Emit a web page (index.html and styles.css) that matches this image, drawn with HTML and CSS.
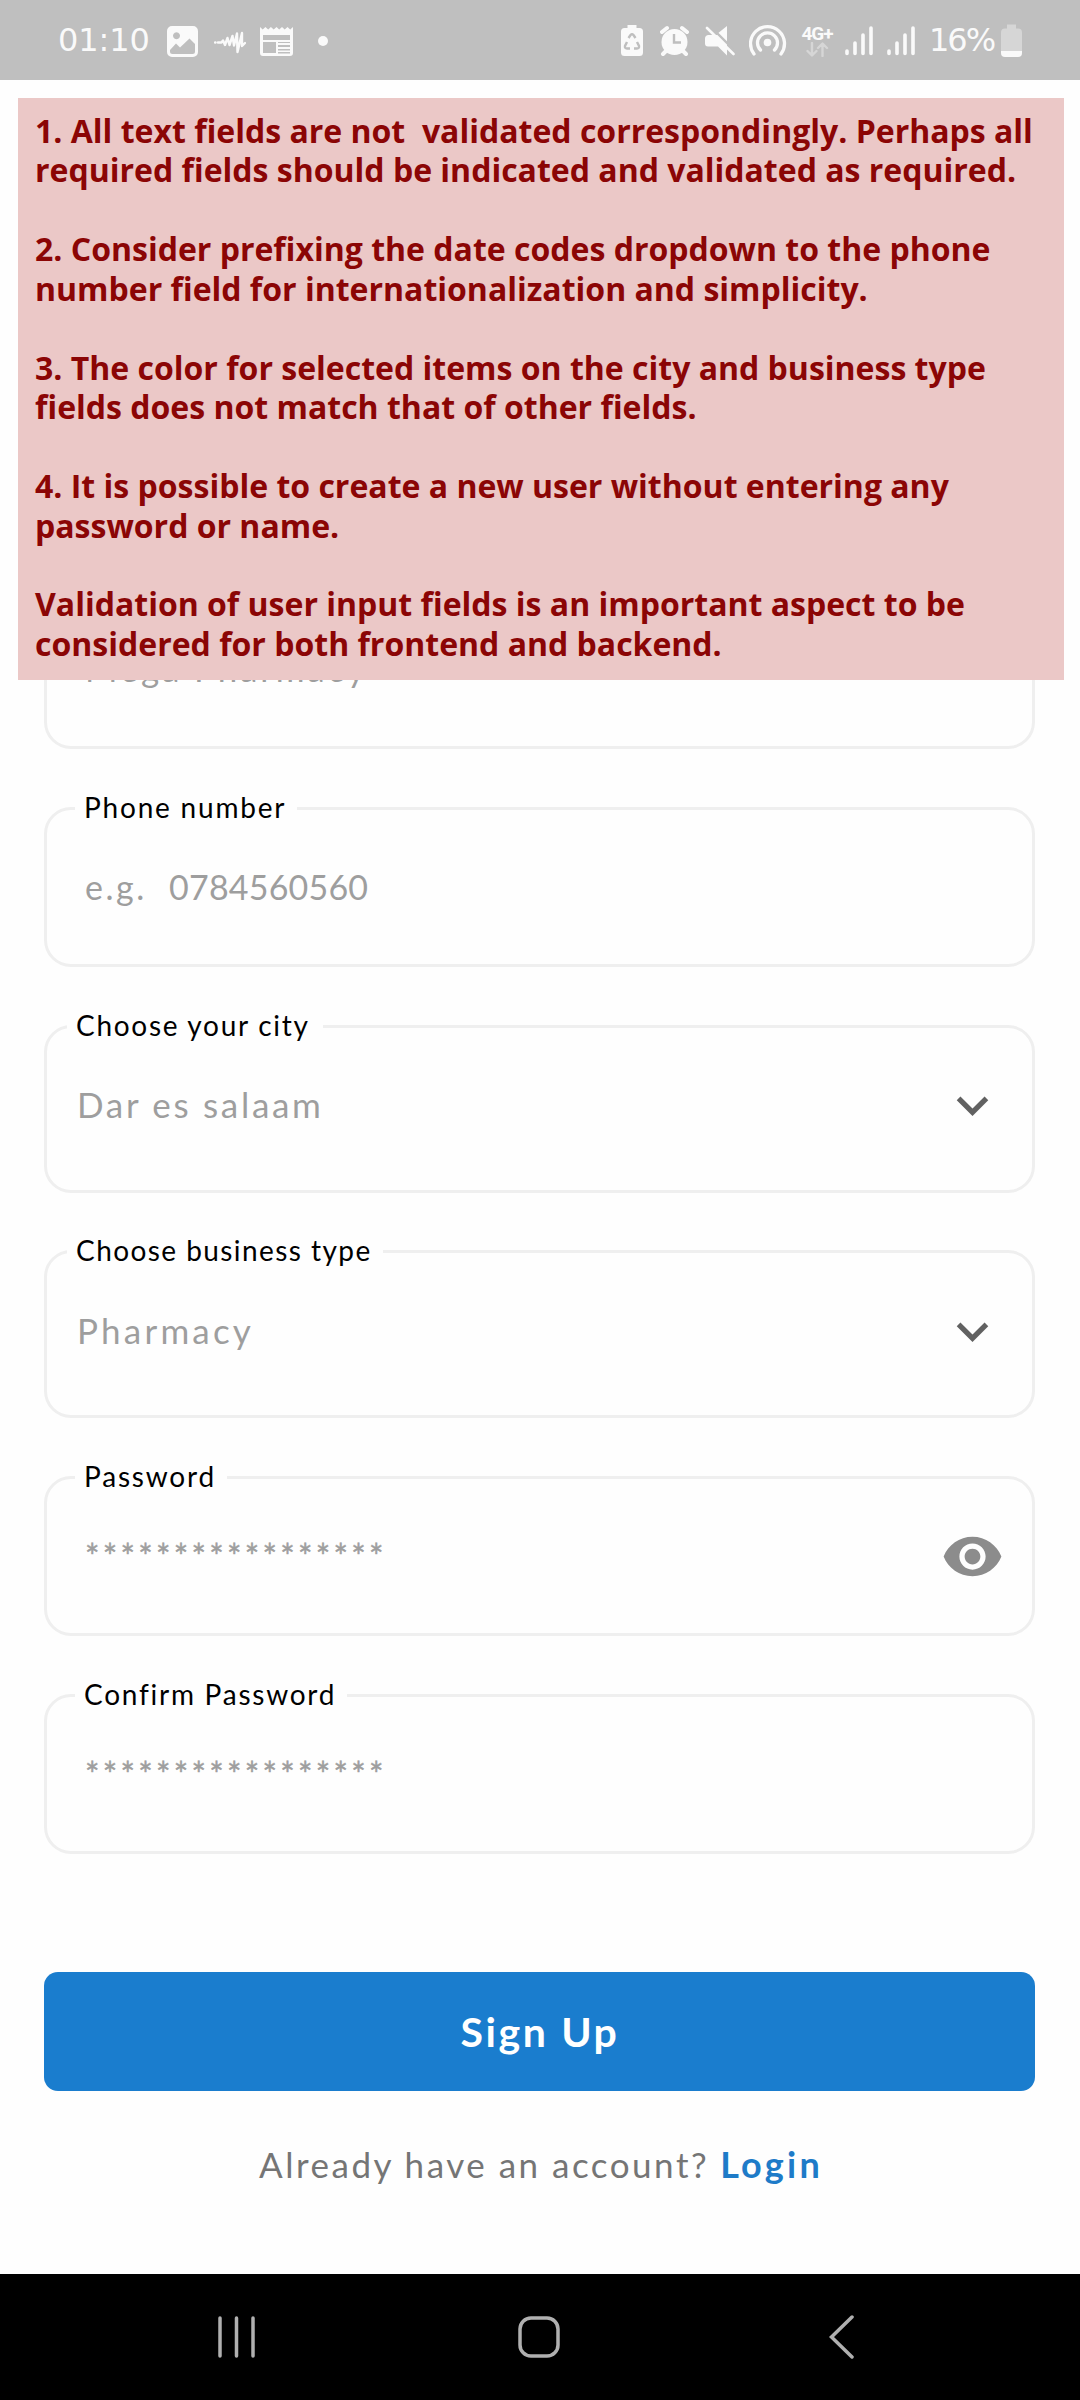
FILE: index.html
```html
<!DOCTYPE html>
<html lang="en">
<head>
<meta charset="utf-8">
<title>Sign Up</title>
<link rel="stylesheet" href="styles.css">
</head>
<body>
<header class="status">
  <div class="status-group">
    <span class="status-time">01:10</span>
    <svg width="31" height="80" viewBox="167 0 31 80"><path fill-rule="evenodd" d="M172 26h21a5 5 0 0 1 5 5v21a5 5 0 0 1-5 5h-21a5 5 0 0 1-5-5v-21a5 5 0 0 1 5-5zM176.500 32.300a3.500 3.500 0 1 0 .01 0zM170 50v1.500q0 2.500 2.500 2.500h20q2.500 0 2.500-2.500v-7.500l-5.500-5.500-9.500 9-4-4z"/></svg>
    <svg class="gap-wave" width="32" height="80" viewBox="214 0 32 80"><path class="line" stroke-width="2.400" d="M215 42.500h.5M218 42.500h3.500l1.500-2 2 4.500 2.500-7 2 7 3-9 1.500 9.500 3-12 .5 18.500 4.500-19v13l3-3"/></svg>
    <svg class="gap-cal" width="33" height="80" viewBox="260 0 33 80"><path fill-rule="evenodd" d="M260 27l2.700 2.500 2.700-2.500 2.800 2.500 2.700-2.500 2.800 2.500 2.800-2.500 2.700 2.500 2.800-2.500 2.700 2.500 2.800-2.500 2.700 2.500 2.800-2.500v26q0 3-3 3h-27q-3 0-3-3zM263 35v5h27v-5zM263 42v11h13v-11zM278 42v1h12v-1zM278 45v2h12v-2zM278 49v1.500h12v-1.500zM278 52v1.500h12v-1.500z"/></svg>
    <svg class="gap-dot" width="10" height="80" viewBox="318 0 10 80"><circle cx="323" cy="41" r="5"/></svg>
  </div>
  <div class="status-group">
    <svg width="22" height="80" viewBox="621 0 22 80"><path d="M627.500 25h9v3h3q3.500 0 3.500 3.500v21q0 3.500-3.500 3.500h-15q-3.500 0-3.500-3.500v-21q0-3.500 3.500-3.500h3z"/><path class="cut" d="M628.500 38l2-3q1.500-1.500 3 0l2 3M637 42l2 4q.5 2.500-2 2.500h-3M630 48.500h-3q-2.500 0-2-2.500l2-4"/></svg>
    <svg class="gap-alarm" width="30" height="80" viewBox="660 0 30 80"><circle cx="674.500" cy="42" r="13"/><path class="line" stroke-width="4" d="M662 32l5-4M687 32l-5-4M666 51l-3 3M683 51l3 3"/><path class="cut" d="M674 34v8.500h7"/></svg>
    <svg class="gap-mute" width="30" height="80" viewBox="705 0 30 80"><path d="M708 35h12l7 8v12.500l-9-9h-10q-3 0-3-3v-5q0-3 3-3.500zM717 34l10-8v17z"/><path class="cut" stroke-width="2" d="M709.500 25.500l26 26"/><path class="line" stroke-width="2.600" d="M707 28l26.500 26"/></svg>
    <svg class="gap-spot" width="38" height="80" viewBox="749 0 38 80"><circle cx="767.500" cy="42.500" r="3.800"/><path class="line" stroke-width="3.300" d="M754 54a17 17 0 1 1 27 0M760.500 50a10 10 0 1 1 14 0"/></svg>
    <div class="network">
      <span class="network-type">4G+</span>
      <svg class="faded" width="24" height="15" viewBox="0 0 24 15"><path class="line" stroke-width="2.400" d="M7 1v12M2.500 9l4.500 4.500 4.500-4.500M17.500 14v-12M13 6l4.500-4.500 4.500 4.500"/></svg>
    </div>
    <svg class="gap-signal" width="28" height="80" viewBox="845 0 28 80"><path class="line" stroke-width="3.600" d="M847 51v2.500M855 43v10.500M863 35v18.500M871 28v25.500"/></svg>
    <svg class="gap-signal2" width="28" height="80" viewBox="845 0 28 80"><path class="line" stroke-width="3.600" d="M847 51v2.500M855 43v10.500M863 35v18.500M871 28v25.500"/></svg>
    <span class="status-charge">16%</span>
    <svg width="21" height="80" viewBox="1001 0 21 80"><path class="faded" d="M1007 24.500h9v4h2q4 0 4 4v18.500h-21v-18.500q0-4 4-4h2z"/><path d="M1001 51h21v2q0 4-4 4h-13q-4 0-4-4z"/></svg>
  </div>
</header>

<main class="screen">
  <section class="notes">
    <p>1. All text fields are not&nbsp; validated correspondingly. Perhaps all<br>required fields should be indicated and validated as required.</p>
    <p>2. Consider prefixing the date codes dropdown to the phone<br>number field for internationalization and simplicity.</p>
    <p>3. The color for selected items on the city and business type<br>fields does not match that of other fields.</p>
    <p>4. It is possible to create a new user without entering any<br>password or name.</p>
    <p>Validation of user input fields is an important aspect to be<br>considered for both frontend and backend.</p>
  </section>

  <form class="form">
    <div class="field field-first">
      <div class="value value-mega">Mega Pharmacy</div>
    </div>
    <div class="field">
      <label class="label label-phone">Phone number</label>
      <div class="value value-phone"><span><span class="example">e.g.&nbsp; </span>0784560560</span></div>
    </div>
    <div class="field select">
      <label class="label label-city">Choose your city</label>
      <div class="value value-city">Dar es salaam
        <svg class="chevron" width="63" height="63" viewBox="0 0 24 24"><path d="M16.590 8.590L12 13.170 7.410 8.590 6 10l6 6 6-6z"/></svg>
      </div>
    </div>
    <div class="field select select-type">
      <label class="label label-type">Choose business type</label>
      <div class="value value-type">Pharmacy
        <svg class="chevron" width="63" height="63" viewBox="0 0 24 24"><path d="M16.590 8.590L12 13.170 7.410 8.590 6 10l6 6 6-6z"/></svg>
      </div>
    </div>
    <div class="field">
      <label class="label label-pass">Password</label>
      <div class="value value-stars">*****************
        <svg class="eye" width="63" height="63" viewBox="0 0 24 24"><path d="M12 4.500C7 4.500 2.730 7.610 1 12c1.730 4.390 6 7.500 11 7.500s9.270-3.110 11-7.500c-1.730-4.390-6-7.500-11-7.500zM12 17c-2.760 0-5-2.240-5-5s2.240-5 5-5 5 2.240 5 5-2.240 5-5 5zm0-8c-1.660 0-3 1.340-3 3s1.340 3 3 3 3-1.340 3-3-1.340-3-3-3z"/></svg>
      </div>
    </div>
    <div class="field">
      <label class="label label-confirm">Confirm Password</label>
      <div class="value value-stars">*****************</div>
    </div>
    <button class="submit" type="button">Sign Up</button>
    <div class="login"><span>Already have an account?</span><a class="login-link">Login</a></div>
  </form>
</main>

<nav class="nav">
  <svg width="44" height="44" viewBox="0 0 44 44"><path d="M6 3v38M22.500 3v38M39 3v38"/></svg>
  <svg width="44" height="44" viewBox="0 0 44 44"><rect x="3" y="3" width="38" height="38" rx="11"/></svg>
  <svg width="44" height="44" viewBox="0 0 44 44"><path d="M33 2L12.500 22 33 42"/></svg>
</nav>
</body>
</html>
```
FILE: styles.css
```css
* { box-sizing: border-box; }

body {
  margin: 0;
  width: 1080px;
  height: 2400px;
  display: flex;
  flex-direction: column;
  background: #fefefe;
  font-family: Lato, sans-serif;
  overflow: hidden;
}

svg { display: block; flex: none; }

/* Status bar */
.status {
  height: 80px;
  padding: 0 58px;
  display: flex;
  justify-content: space-between;
  background: #bfbfbf;
  color: #fafafa;
}
.status svg { fill: #fafafa; }
.status .line { fill: none; stroke: #fafafa; stroke-linecap: round; stroke-linejoin: round; }
.status .cut { fill: none; stroke: #bfbfbf; stroke-width: 2.4; }
.status .faded { fill: #d6d6d6; }
.status .faded .line { stroke: #d6d6d6; }
.status-group { display: flex; align-items: center; }
.status-time, .status-charge { font: 32px/80px "DejaVu Sans", sans-serif; white-space: nowrap; }
.status-time { width: 109px; letter-spacing: -0.1px; }
.status-charge { width: 72px; margin-left: 14px; letter-spacing: -2px; }
.gap-wave { margin-left: 16px; }
.gap-cal { margin-left: 14px; }
.gap-dot { margin-left: 25px; }
.gap-alarm { margin-left: 17px; }
.gap-mute { margin-left: 15px; }
.gap-spot { margin-left: 14px; }
.gap-signal { margin-left: 12px; }
.gap-signal2 { margin-left: 14px; }
.network {
  width: 32px;
  margin-left: 14px;
  padding-top: 2px;
  display: flex;
  flex-direction: column;
  align-items: center;
}
.network-type { font: bold 19px/16px Roboto, sans-serif; letter-spacing: -1px; }

/* Review notes laid over the form */
.screen { position: relative; height: 2194px; }
.notes {
  position: absolute;
  left: 18px;
  top: 18px;
  width: 1046px;
  height: 582px;
  padding: 13px 17px;
  display: flex;
  flex-direction: column;
  gap: 39.460px;
  background: #ebc8c7;
  color: #8b0505;
  font: bold 32px/39.460px "Open Sans", sans-serif;
  white-space: nowrap;
}
.notes p { margin: 0; }

/* Form */
.form {
  padding: 509px 45px 0 44px;
  display: flex;
  flex-direction: column;
}
.field {
  height: 160px;
  margin-bottom: 58px;
  border: 3px solid #efefef;
  border-radius: 27px;
}
.field-first { padding-top: 52px; }
.select { height: 168px; margin-bottom: 57px; }
.select-type { margin-bottom: 58px; }
.label {
  display: block;
  width: fit-content;
  height: 40px;
  margin: -23px 0 0 28px;
  padding: 0 11px 0 9px;
  background: #fefefe;
  color: #000;
  font-size: 28px;
  line-height: 40px;
  white-space: nowrap;
}
.select .label { margin-left: 20px; }
.label-phone { letter-spacing: 1.800px; }
.label-city { letter-spacing: 1.700px; padding-right: 13px; }
.label-type { letter-spacing: 1.430px; }
.label-pass { letter-spacing: 1.800px; }
.label-confirm { letter-spacing: 1.750px; }
.value {
  height: 48px;
  margin-top: 35px;
  padding: 0 28px 0 38px;
  display: flex;
  align-items: center;
  justify-content: space-between;
  color: #9e9e9e;
  font-size: 35px;
  line-height: 48px;
  white-space: nowrap;
}
.value-mega { margin-top: 0; letter-spacing: 2.800px; }
.value-phone { margin-top: 36px; font-size: 34px; letter-spacing: 0.200px; }
.example { letter-spacing: 2.500px; }
.value-city { padding-left: 30px; letter-spacing: 2.700px; }
.value-type { margin-top: 36px; padding-left: 30px; letter-spacing: 3.200px; }
.value-stars { margin-top: 36px; font-size: 34px; letter-spacing: 3.300px; -webkit-text-stroke: 0.5px #9e9e9e; }
.chevron { margin-top: 3px; fill: #616161; }
.eye { margin-top: 1px; fill: #8c8c8c; }

.submit {
  height: 119px;
  margin-top: 60px;
  padding: 0 0 1px 1px;
  border: 0;
  border-radius: 14px;
  background: #1a7dce;
  color: #fff;
  font: bold 41px/1 Lato, sans-serif;
  letter-spacing: 2.600px;
}
.login {
  margin-top: 49px;
  padding-left: 3px;
  display: flex;
  justify-content: center;
  gap: 11px;
  color: #757575;
  font-size: 35px;
  line-height: 48px;
  letter-spacing: 2.500px;
}
.login-link { color: #1e7bc8; font-weight: bold; font-size: 36px; letter-spacing: 3.200px; }

/* System navigation */
.nav {
  height: 126px;
  padding: 0 217px 0 214px;
  display: flex;
  align-items: center;
  justify-content: space-between;
  background: #000;
}
.nav svg { fill: none; stroke: #b0b0b0; stroke-width: 3.500; stroke-linecap: round; }
```
